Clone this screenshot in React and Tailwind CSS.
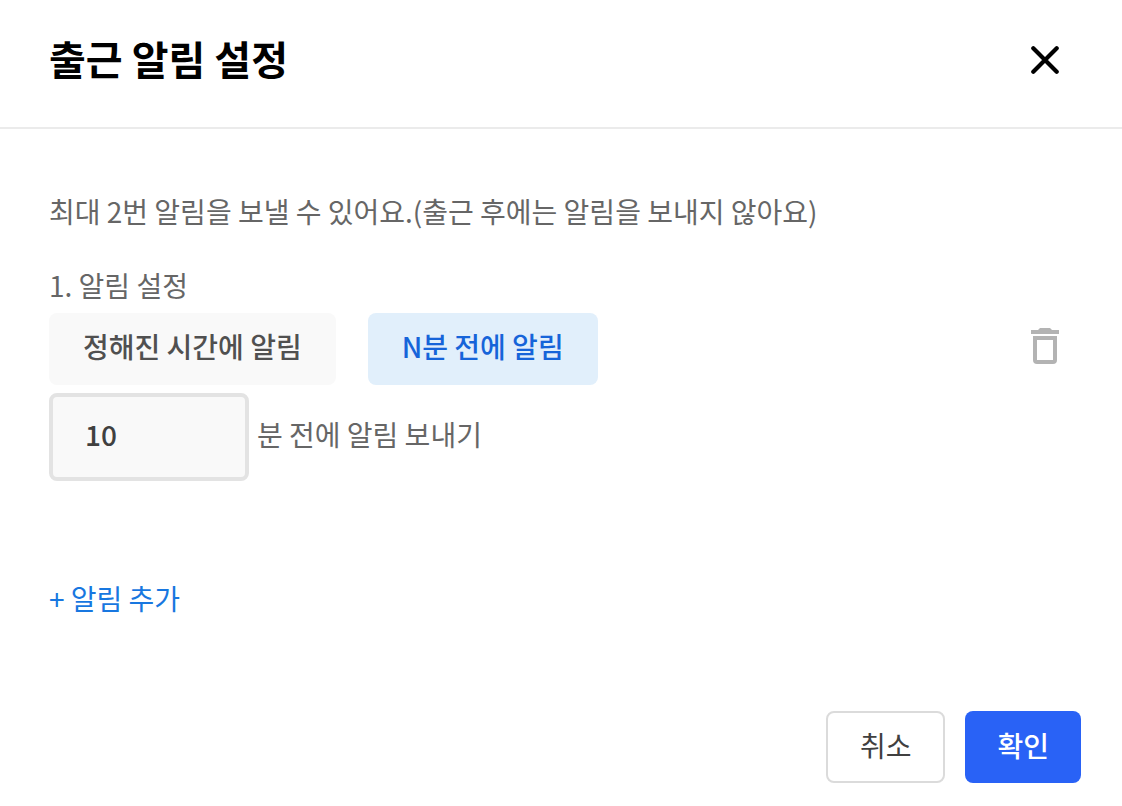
import React, { useState } from 'react';

const modes = [
  { id: 'fixed', label: '정해진 시간에 알림' },
  { id: 'before', label: 'N분 전에 알림' },
];

const CloseIcon = () => (
  <svg viewBox="0 0 28 28" className="w-7 h-7" fill="none" stroke="currentColor" strokeWidth="4.2" strokeLinecap="round" aria-hidden="true">
    <path d="M2.3 2.3 25.7 25.7M25.7 2.3 2.3 25.7" />
  </svg>
);

const TrashIcon = () => (
  <svg viewBox="0 0 28 36" className="w-7 h-9" fill="currentColor" aria-hidden="true">
    <path fillRule="evenodd" d="M2 8h24v24a4 4 0 0 1-4 4H6a4 4 0 0 1-4-4V8Zm4 4v20h16V12H6Z" />
    <path d="M0 2h7l2-2h10l2 2h7v4H0V2Z" />
  </svg>
);

const App = () => {
  const [mode, setMode] = useState('before');
  const [minutes, setMinutes] = useState('10');

  return (
    <section
      role="dialog"
      aria-labelledby="alarm-title"
      className="min-h-screen flex flex-col bg-white text-[#666666] text-[28px] leading-9 font-['Noto_Sans_CJK_KR','Noto_Sans',sans-serif]"
    >
      <header className="flex items-center justify-between h-[129px] pl-[49px] pr-[63px] pb-2 border-b-2 border-[#ebebeb] text-black">
        <h1 id="alarm-title" className="pb-1 text-[40px] leading-[56px] font-bold">출근 알림 설정</h1>
        <button type="button" aria-label="닫기"><CloseIcon /></button>
      </header>

      <main className="flex-1 pl-[49px] pr-[63px] pt-16">
        <p>최대 2번 알림을 보낼 수 있어요.(출근 후에는 알림을 보내지 않아요)</p>

        <h2 className="mt-[38px]">1. 알림 설정</h2>
        <div className="mt-[10px] flex items-center justify-between">
          <div className="flex gap-8">
            {modes.map((item) => (
              <button
                key={item.id}
                type="button"
                aria-pressed={mode === item.id}
                onClick={() => setMode(item.id)}
                className={`h-[72px] px-[34px] pb-1.5 rounded-lg font-medium ${
                  mode === item.id ? 'bg-[#e1effb] text-[#1664d9]' : 'bg-[#f9f9f9] text-[#505050]'
                }`}
              >
                {item.label}
              </button>
            ))}
          </div>
          <button type="button" aria-label="알림 삭제" className="pb-1.5 text-[#b3b3b3]"><TrashIcon /></button>
        </div>
        <div className="mt-2 flex items-center gap-2">
          <input
            id="minutes"
            type="text"
            inputMode="numeric"
            value={minutes}
            onChange={(e) => setMinutes(e.target.value)}
            className="w-[200px] h-[88px] px-8 pb-1.5 rounded-lg border-4 border-[#e3e3e3] bg-[#f9f9f9] text-[#404040] font-medium"
          />
          <label htmlFor="minutes" className="pb-1.5">분 전에 알림 보내기</label>
        </div>

        <button type="button" className="mt-[99px] text-[#1877e0]">+ 알림 추가</button>
      </main>

      <footer className="flex justify-end gap-5 pr-[41px] pb-[23px]">
        <button type="button" className="h-[72px] px-8 pb-1 rounded-lg border-2 border-[#dbdbdb] bg-white text-[#404040]">취소</button>
        <button type="button" className="h-[72px] px-8 pb-1 rounded-lg bg-[#2962f6] text-white font-medium">확인</button>
      </footer>
    </section>
  );
};

export default App;
